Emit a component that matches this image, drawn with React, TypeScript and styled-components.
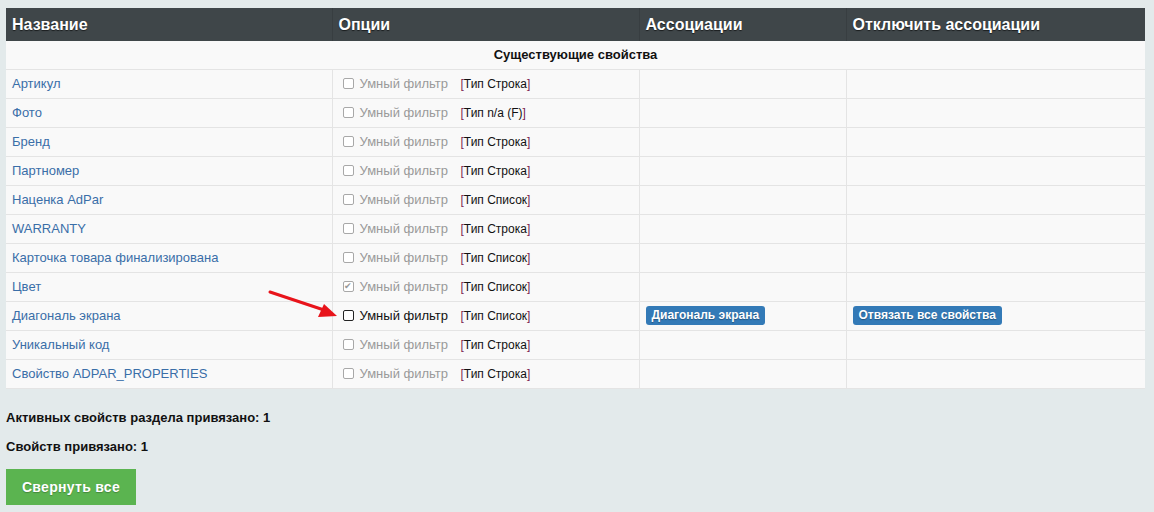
import React from 'react';
import styled, { createGlobalStyle } from 'styled-components';

const GlobalStyle = createGlobalStyle`
  html, body {
    margin: 0;
    padding: 0;
    background: #e3eaeb;
    font-family: "Liberation Sans", Arial, sans-serif;
  }
`;

const Page = styled.div`
  position: relative;
  padding: 8px 9px 0 6px;
  width: 1154px;
  box-sizing: border-box;
`;

const Table = styled.table`
  width: 1139px;
  border-collapse: collapse;
  table-layout: fixed;
  background: #f9f9f9;
  font-size: 13px;
`;

const HeadCell = styled.th`
  background: #3f4649;
  color: #fff;
  font-size: 16px;
  font-weight: bold;
  text-align: left;
  height: 33px;
  padding: 0 6px;
  text-shadow: 0 1px 1px rgba(0, 0, 0, 0.6);
  border-left: 1px solid #383e41;
  &:first-child {
    border-left: none;
  }
`;

const SectionCell = styled.td`
  text-align: center;
  font-weight: bold;
  color: #111;
  height: 27px;
  padding: 0 0 1px;
  border-bottom: 1px solid #e4e4e4;
`;

const Cell = styled.td`
  height: 27px;
  padding: 0 6px 1px;
  border-bottom: 1px solid #e4e4e4;
  border-left: 1px solid #e4e4e4;
  vertical-align: middle;
  white-space: nowrap;
  &:first-child {
    border-left: none;
  }
`;

const NameLink = styled.a`
  color: #3a6ea8;
  text-decoration: none;
`;

const Options = styled.div`
  display: flex;
  align-items: center;
  padding-left: 4px;
`;

const Check = styled.span<{ $active?: boolean; $checked?: boolean }>`
  display: inline-flex;
  align-items: center;
  justify-content: center;
  width: 9px;
  height: 9px;
  border: 1px solid ${(p) => (p.$active ? '#222' : '#a8a8a8')};
  border-radius: 2px;
  background: #fff;
  margin-right: 6px;
  color: #999;
  font-size: 9px;
  line-height: 1;
`;

const FilterLabel = styled.span<{ $active?: boolean }>`
  color: ${(p) => (p.$active ? '#111' : '#9a9a9a')};
  width: 101px;
`;

const TypeLabel = styled.span`
  color: #111;
  font-size: 12px;
  & b {
    font-weight: normal;
    color: #7a1d4e;
  }
`;

const Tag = styled.span`
  display: inline-block;
  background: #337ab7;
  color: #fff;
  font-weight: bold;
  font-size: 12px;
  padding: 2px 6px 3px;
  border-radius: 3px;
  text-shadow: 0 1px 1px rgba(0, 0, 0, 0.3);
`;

const Summary = styled.p`
  margin: 0;
  font-size: 13px;
  font-weight: bold;
  color: #111;
`;

const Footer = styled.div`
  display: flex;
  flex-direction: column;
  gap: 14px;
  padding-top: 21px;
`;

const CollapseButton = styled.button`
  align-self: flex-start;
  margin-top: 1px;
  width: 130px;
  height: 36px;
  border: none;
  background: #5bb450;
  color: #fff;
  font-family: inherit;
  font-weight: bold;
  font-size: 14px;
  letter-spacing: 0.3px;
  text-shadow: 0 1px 1px rgba(0, 0, 0, 0.25);
`;

const Arrow = styled.svg`
  position: absolute;
  left: 266px;
  top: 288px;
  overflow: visible;
`;

type Row = { name: string; type: string; checked?: boolean; active?: boolean; assoc?: string };

const rows: Row[] = [
  { name: 'Артикул', type: 'Тип Строка' },
  { name: 'Фото', type: 'Тип n/a (F)' },
  { name: 'Бренд', type: 'Тип Строка' },
  { name: 'Партномер', type: 'Тип Строка' },
  { name: 'Наценка AdPar', type: 'Тип Список' },
  { name: 'WARRANTY', type: 'Тип Строка' },
  { name: 'Карточка товара финализирована', type: 'Тип Список' },
  { name: 'Цвет', type: 'Тип Список', checked: true },
  { name: 'Диагональ экрана', type: 'Тип Список', active: true, assoc: 'Диагональ экрана' },
  { name: 'Уникальный код', type: 'Тип Строка' },
  { name: 'Свойство ADPAR_PROPERTIES', type: 'Тип Строка' },
];

const App = () => {
  return (
    <Page>
      <GlobalStyle />
      <Table>
        <colgroup>
          <col style={{ width: 326 }} />
          <col style={{ width: 307 }} />
          <col style={{ width: 207 }} />
          <col style={{ width: 299 }} />
        </colgroup>
        <thead>
          <tr>
            <HeadCell>Название</HeadCell>
            <HeadCell>Опции</HeadCell>
            <HeadCell>Ассоциации</HeadCell>
            <HeadCell>Отключить ассоциации</HeadCell>
          </tr>
        </thead>
        <tbody>
          <tr>
            <SectionCell colSpan={4}>Существующие свойства</SectionCell>
          </tr>
          {rows.map((row) => (
            <tr key={row.name}>
              <Cell>
                <NameLink href="#">{row.name}</NameLink>
              </Cell>
              <Cell>
                <Options>
                  <Check $active={row.active} $checked={row.checked}>
                    {row.checked ? '✔' : ''}
                  </Check>
                  <FilterLabel $active={row.active}>Умный фильтр</FilterLabel>
                  <TypeLabel>
                    <b>[</b>
                    {row.type}
                    <b>]</b>
                  </TypeLabel>
                </Options>
              </Cell>
              <Cell>{row.assoc && <Tag>{row.assoc}</Tag>}</Cell>
              <Cell>{row.assoc && <Tag>Отвязать все свойства</Tag>}</Cell>
            </tr>
          ))}
        </tbody>
      </Table>
      <Footer>
        <Summary>Активных свойств раздела привязано: 1</Summary>
        <Summary>Свойств привязано: 1</Summary>
        <CollapseButton>Свернуть все</CollapseButton>
      </Footer>
      <Arrow width="72" height="32" viewBox="0 0 72 32">
        <line x1="4" y1="4" x2="58" y2="22" stroke="#e8141b" strokeWidth="3" strokeLinecap="round" />
        <polygon points="71,28 52,29 58,16" fill="#e8141b" />
      </Arrow>
    </Page>
  );
};

export default App;
